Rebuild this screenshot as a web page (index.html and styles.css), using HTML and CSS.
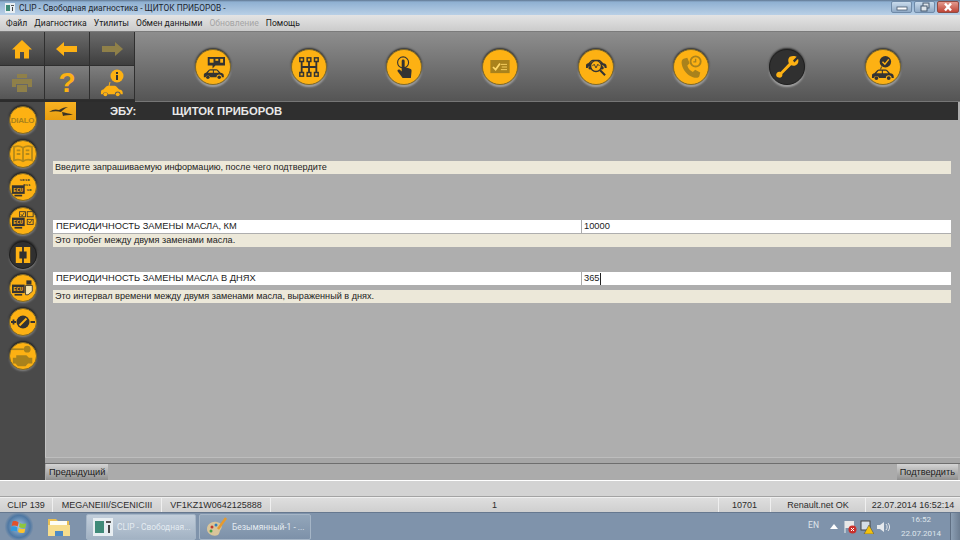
FILE: index.html
```html
<!DOCTYPE html>
<html lang="ru">
<head>
<meta charset="utf-8">
<title>CLIP</title>
<link rel="stylesheet" href="styles.css">
</head>
<body>
<svg class="defs" width="0" height="0">
  <defs>
    <symbol id="car" viewBox="0 0 24 12">
      <path d="M1 10V7.2C1 6 2 5.4 3.5 5L6.5 1.8C7 1.2 7.6 1 8.5 1H15C16 1 16.6 1.3 17.3 2L20 5C22 5.3 23.4 6 23.6 7.5L23.8 10H21.5A3 3 0 0 0 15.5 10H8.5A3 3 0 0 0 2.8 10Z"/>
      <circle cx="5.6" cy="10" r="2"/><circle cx="18.5" cy="10" r="2"/>
      <path d="M7.8 2.4H11.3V5H5.6ZM12.4 2.4H15.8L18 5H12.4Z" fill="#fdb113"/>
    </symbol>
  </defs>
</svg>
<div class="window">
  <header class="titlebar">
    <svg class="appicon" viewBox="0 0 10 10"><rect width="10" height="10" fill="#e8eef2"/><rect x="1" y="2" width="4" height="6" fill="#3f8a78"/><rect x="6" y="2" width="3" height="1" fill="#555"/><rect x="7" y="4" width="1" height="4" fill="#444"/></svg>
    <span class="titletext">CLIP - Свободная диагностика - ЩИТОК ПРИБОРОВ -</span>
    <div class="winbtns">
      <span class="winbtn"><svg width="12" height="8" viewBox="0 0 12 8"><rect x="1" y="4" width="10" height="3" fill="#fff" stroke="#45586e" stroke-width=".8"/></svg></span>
      <span class="winbtn"><svg width="12" height="10" viewBox="0 0 12 10"><rect x="4" y="1" width="6" height="5" fill="#dfe5ea" stroke="#45586e"/><rect x="2" y="4" width="6" height="5" fill="#dfe5ea" stroke="#45586e"/></svg></span>
      <span class="winbtn close"><svg width="12" height="10" viewBox="0 0 12 10"><path d="M3 1.5L9 8.5M9 1.5L3 8.5" stroke="#fff" stroke-width="2.4"/></svg></span>
    </div>
  </header>
  <nav class="menubar">
    <span>Файл</span><span>Диагностика</span><span>Утилиты</span><span>Обмен данными</span><span class="off">Обновление</span><span>Помощь</span>
  </nav>
  <section class="toolbar">
    <div class="toolgrid">
      <div class="tool"><svg width="20" height="20" viewBox="0 0 20 20"><path fill="#fdb113" d="M10 1L20 10.5H17V19.5H12V13H8V19.5H3V10.5H0Z"/></svg></div>
      <div class="tool"><svg width="22" height="14" viewBox="0 0 22 14"><path fill="#fdb113" d="M0 7L8 0V4H21V10H8V14Z"/></svg></div>
      <div class="tool"><svg width="22" height="14" viewBox="0 0 22 14"><path fill="#8f8049" d="M22 7L14 0V4H1V10H14V14Z"/></svg></div>
      <div class="tool"><svg width="20" height="18" viewBox="0 0 20 18"><path fill="#8f8049" d="M5 0H15V4H5ZM0 5H20V13H16V10H4V13H0ZM5 11H15V18H5Z"/></svg></div>
      <div class="tool"><span class="qmark">?</span></div>
      <div class="tool"><svg width="24" height="28" viewBox="0 0 24 28"><circle cx="17" cy="7" r="6.5" fill="#fdb113"/><rect x="16" y="6" width="2" height="5" fill="#333"/><rect x="16" y="3" width="2" height="2" fill="#333"/><path d="M10 13L9 17" stroke="#fdb113"/><use href="#car" x="0" y="15" width="23" height="13" fill="#fdb113"/></svg></div>
    </div>
    <div class="toprow">
      <span class="disc"><svg width="23" height="23" viewBox="0 0 24 24"><path fill="#333" d="M6 1H24V10H14L11 13V10H6Z"/><rect x="8" y="3" width="4" height="4" fill="#fdb113"/><rect x="14" y="3" width="3" height="2" fill="#fdb113"/><rect x="19" y="3" width="3" height="4" fill="#fdb113"/><use href="#car" x="0" y="13" width="24" height="11" fill="#333"/></svg></span>
      <span class="disc"><svg width="22" height="22" viewBox="0 0 24 24"><g fill="none" stroke="#333" stroke-width="2"><path d="M4 6V18M12 6V18M20 6V18M4 12H20"/></g><g fill="#fdb113" stroke="#333" stroke-width="1.6"><rect x="2" y="2" width="4" height="4"/><rect x="10" y="2" width="4" height="4"/><rect x="18" y="2" width="4" height="4"/><rect x="2" y="18" width="4" height="4"/><rect x="10" y="18" width="4" height="4"/><rect x="18" y="18" width="4" height="4"/></g></svg></span>
      <span class="disc"><svg width="22" height="24" viewBox="0 0 24 26"><circle cx="11" cy="8" r="6" fill="none" stroke="#333" stroke-width="1.2"/><path fill="#333" d="M9.5 6.5a1.6 1.6 0 0 1 3.2 0V13L18 14.5C20 15 20.5 16 20.2 18L19.5 25H10.5L5 17.5C4.500 16 6 15 7.500 16L9.500 18Z"/></svg></span>
      <span class="disc"><svg width="20" height="14" viewBox="0 0 22 16"><rect width="22" height="15" fill="#a9821c"/><path d="M3 8L6 11L11 4" fill="none" stroke="#ffd869" stroke-width="2"/><path d="M12 5H19M13 8H19M12 11H19" stroke="#ffd869" stroke-width="1"/></svg></span>
      <span class="disc"><svg width="24" height="20" viewBox="0 0 26 22"><use href="#car" x="0" y="2" width="26" height="12" fill="#333"/><circle cx="13" cy="10" r="6" fill="#fdb113" stroke="#333" stroke-width="1.500"/><path d="M9 10L11 8L13 12L15 8L17 10" fill="none" stroke="#333"/><path d="M17.500 14.500L23 20" stroke="#333" stroke-width="2.200"/></svg></span>
      <span class="disc"><svg width="24" height="24" viewBox="0 0 26 26"><path fill="#a9821c" d="M5 4L9 3L11.500 9L9 11.500C10 15 12 17 15 18.500L17.500 16L23 19L22 23C21 25 18 25 15 24C9 22 4 16 3 10C2.500 7 3 5 5 4Z"/><circle cx="18" cy="7" r="5.500" fill="none" stroke="#a9821c" stroke-width="2"/><path d="M18 4V7.500H15.500" fill="none" stroke="#a9821c" stroke-width="1.500"/></svg></span>
      <span class="disc dark"><svg width="24" height="24" viewBox="0 0 26 26"><path fill="#fdb113" d="M16 2C19 0.500 22 1 23.500 2L19.500 6L21 8L25 4C26 7 25 10 22.500 11C20.500 12 18.500 11.500 17.500 11L8 20.500C8.500 23 6.500 25 4 24.500C1.500 24 0.500 21.500 2 19.500C3 18.300 4.500 18 6 18.500L15 9C14 6.500 14 4 16 2Z"/></svg></span>
      <span class="disc"><svg width="23" height="25" viewBox="0 0 24 26"><circle cx="15" cy="7" r="6" fill="#333"/><path d="M12 7L14.500 9.500L18.500 4.500" fill="none" stroke="#fdb113" stroke-width="1.500"/><path d="M11 12L10 15" stroke="#333"/><use href="#car" x="0" y="14" width="24" height="12" fill="#333"/></svg></span>
    </div>
  </section>
  <div class="workspace">
    <aside class="sidebar">
      <span class="disc side"><b class="dialo">DIALO</b></span>
      <span class="disc side"><svg width="22" height="18" viewBox="0 0 24 20"><path fill="none" stroke="#b58a1a" stroke-width="2" d="M12 3C9 1 5 1 2 2V17C5 16 9 16 12 18C15 16 19 16 22 17V2C19 1 15 1 12 3ZM12 3V18M5 6H9M5 10H9M15 6H19M15 10H19"/></svg></span>
      <span class="disc side"><svg width="24" height="24" viewBox="0 0 28 28"><text x="10" y="7" class="bits">1010</text><text x="14" y="13" class="bits">011</text><text x="18" y="19" class="bits">10</text><rect x="1" y="12" width="15" height="10" fill="#333"/><text x="2.500" y="20" class="ecu">ECU</text><path d="M4 24H13" stroke="#333" stroke-width="2"/></svg></span>
      <span class="disc side"><svg width="24" height="22" viewBox="0 0 28 26"><g fill="none" stroke="#333"><rect x="10" y="2" width="7" height="6"/><rect x="19" y="2" width="7" height="6"/><rect x="19" y="11" width="7" height="6"/></g><path d="M11.500 5L13 7L15.500 3M20.500 13.500L22 15.500L24.500 12" fill="none" stroke="#333"/><rect x="1" y="9" width="15" height="10" fill="#333"/><text x="2.500" y="17" class="ecu">ECU</text><path d="M4 21H13" stroke="#333" stroke-width="2"/></svg></span>
      <span class="disc side dark"><svg width="18" height="18" viewBox="0 0 20 20"><path fill="#fdb113" d="M2 1H9V6H6V14H9V19H2ZM11 1H18V19H11V14H14V6H11Z"/></svg></span>
      <span class="disc side"><svg width="22" height="18" viewBox="0 0 26 20"><rect x="0" y="6" width="15" height="10" fill="#333"/><text x="1.500" y="14" class="ecu">ECU</text><path d="M3 18H12" stroke="#333" stroke-width="2"/><rect x="17" y="1" width="6" height="5" fill="#333"/><path d="M16 7H24V14L19 18H16Z" fill="#f3e3b0" stroke="#333"/></svg></span>
      <span class="disc side"><svg width="24" height="14" viewBox="0 0 24 14"><path d="M0 7H5M2.500 4.500V9.500M19.500 7H24" stroke="#333" stroke-width="1.800"/><circle cx="12" cy="7" r="6.500" fill="#333"/><path d="M8.500 10.500L15.500 3.500" stroke="#fdb113" stroke-width="2"/></svg></span>
      <span class="disc side"><svg width="24" height="22" viewBox="0 0 28 26"><circle cx="19" cy="5" r="4" fill="#a9821c"/><path d="M1 5H15" stroke="#a9821c" stroke-width="2"/><path fill="#a9821c" d="M6 12H18L21 15H25V22H20L17 25H8L5 22H2V15H6Z"/></svg></span>
    </aside>
    <main class="panel">
      <div class="ecubar">
        <span class="ecubadge"><svg width="26" height="11" viewBox="0 0 26 11"><path d="M1 6C5 3 8 3 11 4C14 2 17 1 20 1C17 2 15 4 13 6C10 5 6 5 1 6ZM14 6C17 7 21 7 25 9C21 9 17 9 15 10Z" fill="#3a3325"/></svg></span>
        <span class="ecutext ecuname">ЭБУ:</span>
        <span class="ecutext">ЩИТОК ПРИБОРОВ</span>
      </div>
      <div class="content">
        <div class="note intro">Введите запрашиваемую информацию, после чего подтвердите</div>
        <div class="field first"><span class="flabel">ПЕРИОДИЧНОСТЬ ЗАМЕНЫ МАСЛА, КМ</span><span class="fvalue">10000</span></div>
        <div class="note">Это пробег между двумя заменами масла.</div>
        <div class="field second"><span class="flabel">ПЕРИОДИЧНОСТЬ ЗАМЕНЫ МАСЛА В ДНЯХ</span><span class="fvalue">365<i class="caret"></i></span></div>
        <div class="note">Это интервал времени между двумя заменами масла, выраженный в днях.</div>
      </div>
      <div class="actions">
        <button class="btn">Предыдущий</button>
        <button class="btn">Подтвердить</button>
      </div>
    </main>
  </div>
  <div class="band"></div>
  <footer class="status">
    <span>CLIP 139</span><span>MEGANEIII/SCENICIII</span><span>VF1KZ1W0642125888</span><span>1</span><span>10701</span><span>Renault.net OK</span><span>22.07.2014 16:52:14</span>
  </footer>
  <div class="taskbar">
    <span class="orb"><svg width="22" height="22" viewBox="0 0 24 24"><path fill="#e2522c" d="M5 6C8 5 10 6 11.500 7L10.500 11.500C9 10.500 7 10 4 11Z"/><path fill="#8cc63f" d="M13 7.500C15 8.500 17 9 20 8L19 12.500C16 13.500 14 13 12 12Z"/><path fill="#2e9be0" d="M3.800 12C7 11 9 11.500 10.300 12.500L9.500 17C8 16 6 15.500 3 16.500Z"/><path fill="#fdc32b" d="M11.800 13C14 14.500 16 14.500 18.800 13.500L18 18C15 19 13 18.500 11 17.500Z"/></svg></span>
    <span class="folder"><svg width="24" height="24" viewBox="0 0 24 20"><path fill="#e9bf53" d="M1 2H9L11 4H22V18H1Z"/><rect x="3" y="4" width="17" height="5" fill="#fdfdf5"/><path fill="#f6dd8d" d="M1 8H23V19H1Z"/><rect x="8" y="14" width="8" height="5" fill="#4d8ac4"/></svg></span>
    <span class="task active"><svg width="20" height="18" viewBox="0 0 20 18"><rect width="20" height="18" fill="#e8eef2"/><rect x="2" y="3" width="9" height="12" fill="#3f8a78"/><rect x="13" y="3" width="5" height="2" fill="#555"/><rect x="15" y="7" width="2" height="8" fill="#444"/></svg><span class="tasklabel">CLIP - Свободная...</span></span>
    <span class="task"><svg width="22" height="20" viewBox="0 0 22 20"><path fill="#d9c59a" d="M1 12C1 7 6 4 11 5C15 6 17 9 15 12C13 15 14 16 12 18C7 20 1 17 1 12Z"/><circle cx="6" cy="10" r="1.500" fill="#c0392b"/><circle cx="10" cy="8" r="1.500" fill="#2e80c0"/><circle cx="5" cy="14" r="1.500" fill="#43a047"/><path d="M12 12L20 1" stroke="#e59a2f" stroke-width="2.500"/></svg><span class="tasklabel">Безымянный-1 - ...</span></span>
    <div class="tray">
      <span class="lang">EN</span>
      <svg class="chevron" width="8" height="5" viewBox="0 0 8 5"><path d="M4 0L8 5H0Z" fill="#fff"/></svg>
      <svg width="14" height="14" viewBox="0 0 14 14"><path d="M2 1V13" stroke="#eee"/><path d="M2 1H11V8H2Z" fill="#e8e8e8"/><circle cx="9.500" cy="9.500" r="4" fill="#c9302c"/><path d="M8 8L11 11M11 8L8 11" stroke="#fff"/></svg>
      <svg width="14" height="14" viewBox="0 0 14 14"><rect x="1" y="1" width="9" height="9" fill="#d5dde5" stroke="#444"/><path d="M9 5L14 14H4Z" fill="#f4c20d" stroke="#444" stroke-width=".5"/></svg>
      <svg width="14" height="12" viewBox="0 0 14 12"><path d="M0 4H3L7 1V11L3 8H0Z" fill="#e6e9ed"/><path d="M9 3C10.500 5 10.500 7 9 9M11 2C13 4.500 13 7.500 11 10" fill="none" stroke="#e6e9ed"/></svg>
      <span class="clock">16:52<br>22.07.2014</span>
      <span class="showdesk"></span>
    </div>
  </div>
</div>
</body>
</html>
```
FILE: styles.css
```css
* { box-sizing: border-box; }
html, body { margin: 0; padding: 0; }
body { width: 960px; height: 540px; overflow: hidden; font-family: "Liberation Sans", Arial, sans-serif; background: #aeaeae; }
.defs { position: absolute; }
.window { width: 960px; height: 540px; display: flex; flex-direction: column; }

.titlebar { height: 15px; flex: none; display: flex; align-items: center; padding-left: 5px; background: linear-gradient(#5f7690 0, #8fb0d2 2px, #b9d0e6 100%); }
.appicon { width: 10px; height: 10px; margin-right: 4px; }
.titletext { font: 8.400px Roboto, sans-serif; color: #1c2630; white-space: nowrap; }
.winbtns { margin-left: auto; display: flex; gap: 2px; margin-right: 1px; align-self: flex-start; padding-top: 1px; }
.winbtn { width: 21px; height: 12px; display: flex; align-items: center; justify-content: center; border: 1px solid #6f8aa8; border-radius: 2px; background: linear-gradient(#c9dbec, #8fa9c5); }
.winbtn.close { width: 22px; border-color: #8e4a42; background: linear-gradient(#e39a8e, #bf4436); }

.menubar { height: 17px; flex: none; display: flex; align-items: center; gap: 7px; padding-left: 6px; background: linear-gradient(#e4e4e4, #cbcbcb); border-bottom: 1px solid #7b7b7b; font: 8.600px Roboto, sans-serif; color: #1a1a1a; white-space: nowrap; }
.menubar .off { color: #a5a5a5; }

.toolbar { height: 70px; flex: none; display: flex; background: linear-gradient(#8e8e8e, #555 98%, #888 100%); }
.toolgrid { width: 135px; flex: none; display: grid; grid-template-columns: repeat(3, 45px); grid-template-rows: 34px 34px; background: #2c2c2c; padding-bottom: 1px; }
.tool { display: flex; align-items: center; justify-content: center; border-right: 1px solid #2f2f2f; border-bottom: 1px solid #2f2f2f; background: linear-gradient(#6b6b6b, #3e3e3e); }
.tool:nth-child(n+4) { background: linear-gradient(#7e7e7e, #555); }
.qmark { font: bold 28px/1 "Liberation Sans", sans-serif; color: #fdb113; }
.toprow { flex: 1; display: flex; gap: 59.700px; padding: 17px 0 0 60px; align-items: flex-start; }

.disc { width: 36px; height: 36px; flex: none; border-radius: 50%; display: flex; align-items: center; justify-content: center; background: #fdb113; border: 1px solid #806a2a; box-shadow: 0 -1px 2px #2c2c2c, 0 2px 2px #a5a5a5; }
.disc.dark { background: #303030; border-color: #1f1f1f; }
.disc.side { width: 28px; height: 28px; box-shadow: 0 -1px 2px #1d1d1d, 0 1px 2px #8a8a8a, 0 0 0 1px #4a4a4a; }
.dialo { font: bold 8px "Liberation Sans", sans-serif; color: #a9821c; letter-spacing: -.3px; }
.bits { font: bold 5px "Liberation Mono", monospace; fill: #333; }
.ecu { font: bold 6.500px "Liberation Mono", monospace; fill: #fdb113; }

.workspace { flex: 1; min-height: 0; display: flex; }
.sidebar { width: 45px; flex: none; background: #4a4a4a; display: flex; flex-direction: column; align-items: center; gap: 5.700px; padding-top: 4px; }
.panel { flex: 1; min-width: 0; display: flex; flex-direction: column; background: #aeaeae; }
.ecubar { height: 18px; flex: none; display: flex; align-items: center; background: #2f2f2f; margin-right: 2px; }
.ecubadge { width: 31px; height: 18px; display: flex; align-items: center; justify-content: center; background: linear-gradient(#f8b222, #e99e10); }
.ecutext { font: bold 11.300px "Liberation Sans", sans-serif; color: #e8e8e8; white-space: nowrap; }
.ecuname { width: 62px; margin-left: 34px; }

.content { flex: 1; min-height: 0; padding: 41px 9px 0 7px; border-left: 1px solid #c4c4c4; display: flex; flex-direction: column; }
.note { height: 13px; line-height: 13px; padding-left: 2px; flex: none; background: #ece8d9; font-size: 9.100px; color: #222; white-space: nowrap; }
.intro { margin-bottom: 46px; }
.field { height: 13px; flex: none; display: flex; background: #fff; font-size: 9.300px; line-height: 13px; color: #222; margin-bottom: 1px; }
.second { margin-top: 25px; margin-bottom: 5px; }
.flabel { width: 529px; padding-left: 3px; border-right: 1px solid #aaa; white-space: nowrap; }
.fvalue { padding-left: 2px; display: flex; align-items: center; }
.caret { width: 1px; height: 12px; background: #222; }

.actions { height: 23px; flex: none; display: flex; justify-content: space-between; align-items: flex-end; border-top: 1px solid #bdbdbd; background: linear-gradient(#a6a6a6 0, #a6a6a6 5px, #6e6e6e 5px, #6e6e6e 6px, #ababab 6px); padding: 0 2px 0 1px; }
.btn { height: 16px; padding: 0 3px; font: 9.200px "Liberation Sans", sans-serif; color: #1c1c1c; border: 0; background: linear-gradient(#d4d4d4, #8f8f8f); }

.band { height: 17px; flex: none; background: #d3d3d3; border-top: 1px solid #fff; border-bottom: 1px solid #a3a3a3; }
.status { height: 15px; flex: none; display: grid; grid-template-columns: 53px 109px 109px 448px 52px 95px 94px; background: linear-gradient(#dedede, #cfcfcf); border-top: 1px solid #efefef; font-size: 9px; line-height: 14px; color: #2c2c2c; }
.status span { text-align: center; border-right: 1px solid #efefef; white-space: nowrap; }
.status span:last-child { border-right: 0; }

.taskbar { height: 28px; flex: none; display: flex; align-items: center; background: #7f93ab; border-top: 1px solid #66788f; color: #fff; }
.orb { width: 30px; height: 27px; margin-left: 4px; display: flex; align-items: center; justify-content: center; background: radial-gradient(circle, #a2c4e2 0, #4f78a3 55%, #7f93ab 72%); }
.folder { width: 50px; display: flex; justify-content: center; }
.task { height: 26px; width: 112px; flex: none; display: flex; align-items: center; gap: 4px; padding-left: 6px; margin-left: 3px; border: 1px solid #a5b5c6; border-radius: 2px; background: linear-gradient(#93a6ba, #7d91a9); }
.task.active { width: 110px; background: linear-gradient(#c2cedb, #a2b2c3); margin-left: 2px; }
.tasklabel { font: 8.400px Roboto, sans-serif; color: #e4ebf1; white-space: nowrap; }
.tray { margin-left: auto; display: flex; align-items: center; gap: 3px; height: 100%; font: 8.500px Roboto, sans-serif; color: #dfe6ec; }
.lang { margin-right: 8px; margin-bottom: 3px; }
.chevron { margin-right: 2px; }
.clock { width: 46px; margin-left: 4px; margin-right: 3px; text-align: center; line-height: 14px; font-size: 8px; }
.showdesk { width: 10px; height: 27px; background: linear-gradient(90deg, #8c9fb4, #6c7d91); border-left: 1px solid #5f6f83; }
```
